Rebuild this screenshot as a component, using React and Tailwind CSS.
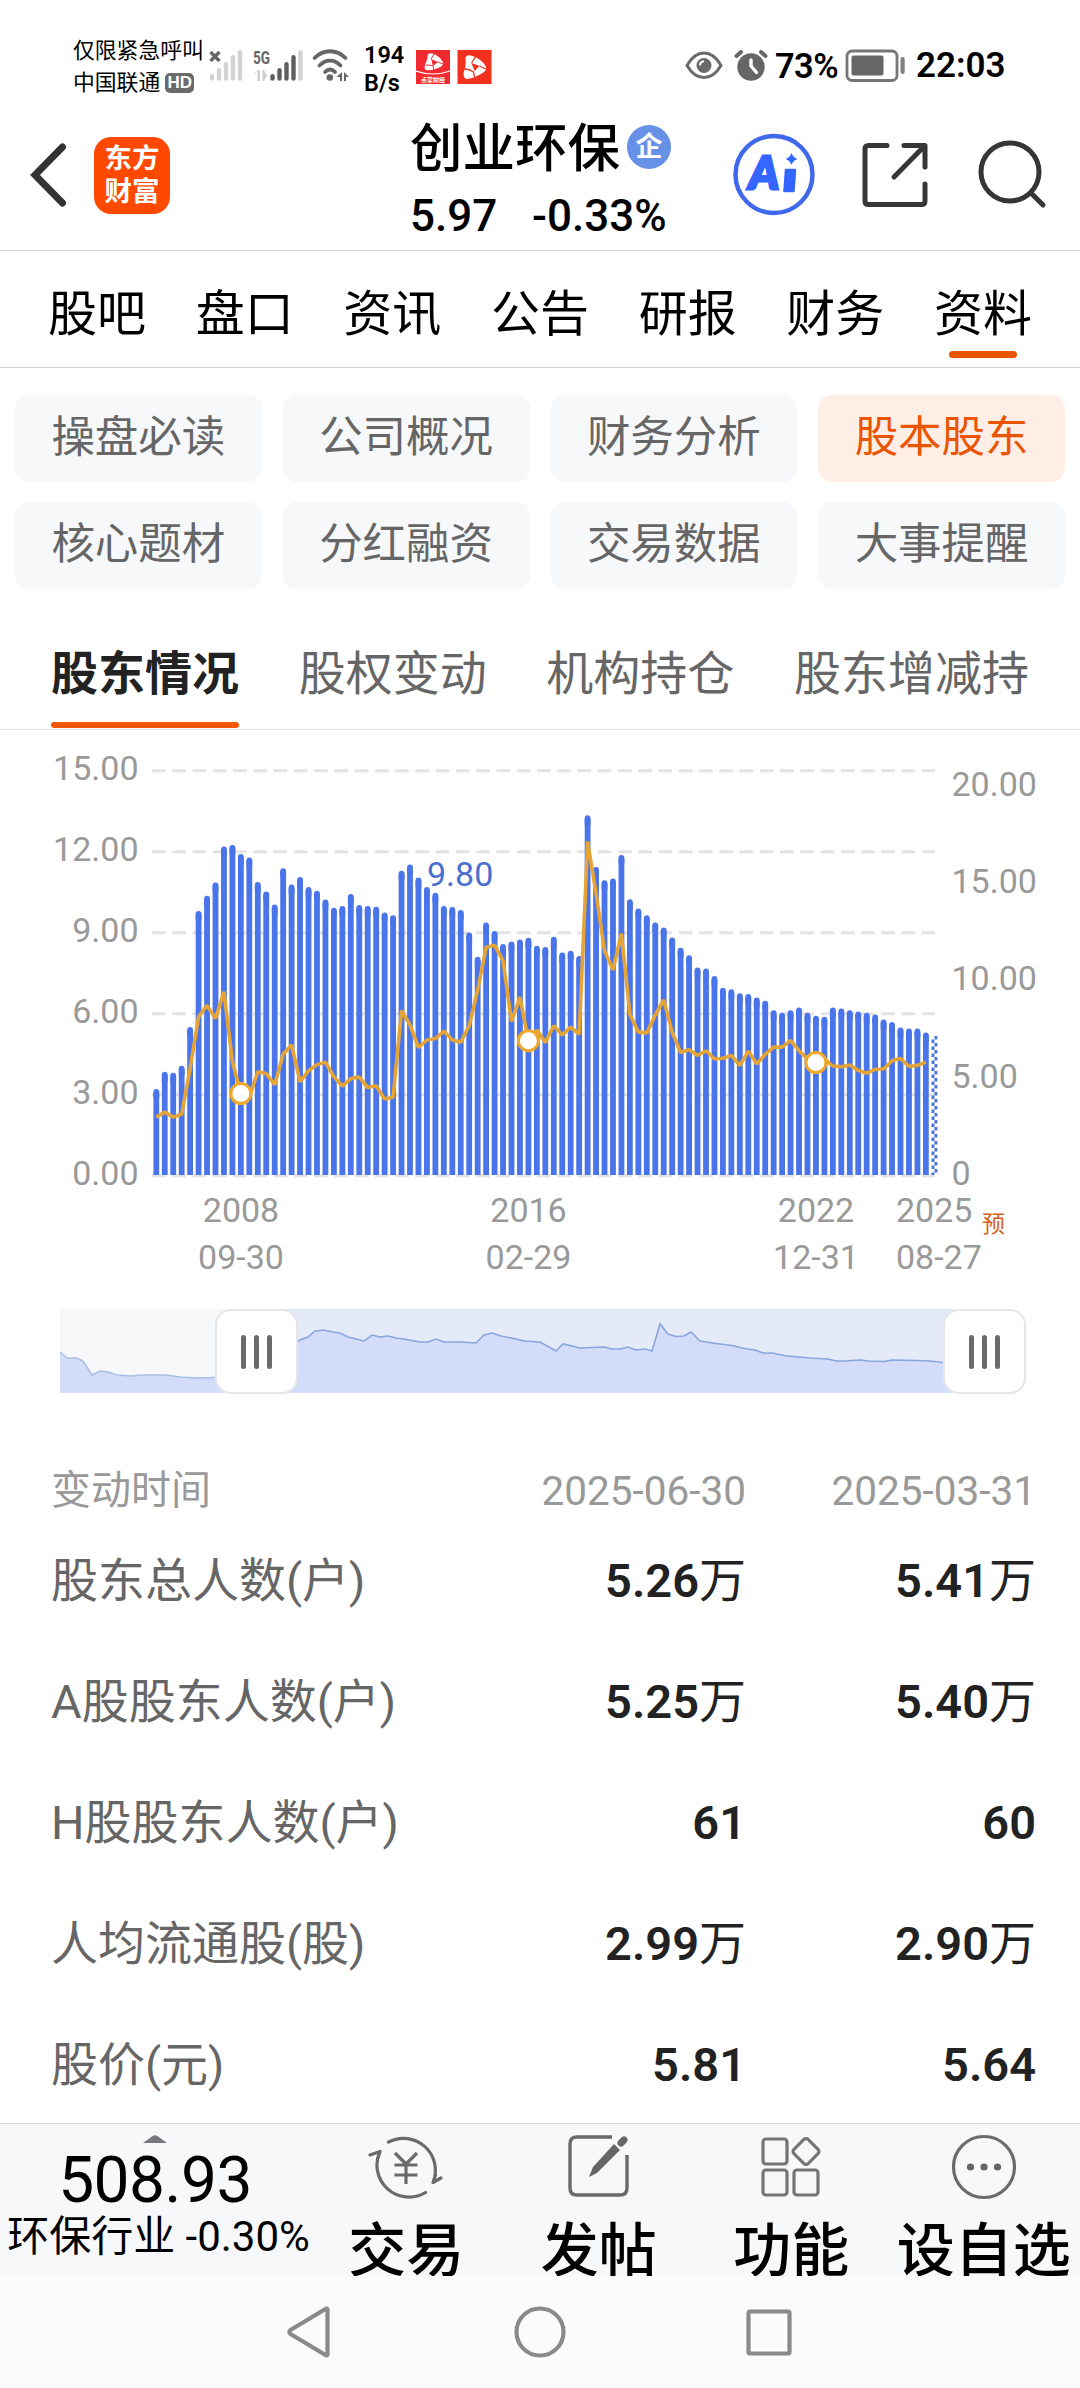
const mainTabs = ["股吧", "盘口", "资讯", "公告", "研报", "财务", "资料"];

const sections = [
  "操盘必读", "公司概况", "财务分析", "股本股东",
  "核心题材", "分红融资", "交易数据", "大事提醒",
];

const subTabs = ["股东情况", "股权变动", "机构持仓", "股东增减持"];

const rows = [
  { label: "股东总人数(户)", values: ["5.26", "5.41"], unit: "万" },
  { label: "A股股东人数(户)", values: ["5.25", "5.40"], unit: "万" },
  { label: "H股股东人数(户)", values: ["61", "60"], unit: "" },
  { label: "人均流通股(股)", values: ["2.99", "2.90"], unit: "万" },
  { label: "股价(元)", values: ["5.81", "5.64"], unit: "" },
];

// chart levels, measured down from the top of the plot in 1/2.8 px
const holders = [
  978, 930, 933, 913, 805, 480, 437, 400, 299, 295, 320, 330, 399, 425, 462, 360, 406, 385, 413, 423,
  448, 471, 466, 432, 463, 466, 468, 484, 492, 367, 350, 386, 413, 429, 466, 469, 477, 540, 608, 512,
  536, 572, 565, 560, 555, 577, 581, 552, 596, 591, 606, 212, 357, 394, 389, 323, 447, 473, 492, 512,
  526, 554, 583, 604, 638, 641, 662, 695, 699, 710, 712, 722, 731, 758, 765, 758, 750, 765, 773, 776,
  750, 753, 758, 761, 765, 770, 784, 791, 806, 809, 809, 820,
];

const prices = [
  1056, 1042, 1056, 1048, 920, 775, 743, 780, 705, 900, 990, 1000, 929, 934, 965, 880, 854, 957, 926, 909,
  902, 943, 969, 948, 944, 973, 968, 1005, 1000, 758, 798, 861, 840, 836, 815, 840, 846, 800, 700, 580,
  575, 618, 788, 720, 842, 812, 847, 800, 826, 804, 824, 284, 430, 590, 644, 542, 768, 818, 820, 770,
  728, 818, 875, 867, 883, 870, 893, 891, 883, 912, 871, 907, 880, 860, 860, 841, 870, 893, 903, 893,
  913, 915, 910, 925, 933, 922, 921, 898, 892, 914, 911, 902,
];

const markers = [10, 44, 78];

const barX = (i) => 156.3 + i * 8.457;
const levelY = (v) => v / 2.8 + 10;

const overviewPast = "0,43 7,49 16,49 23,52 32,66 40,62 48,63 57,66 71,67 80,66 106,66 120,68 137,69 155,68.5 197,68";
const overviewActive =
  "197,60 240,31 248,28 255,22 264,21 273,23 280,24 288,28 296,30 304,32 312,26 320,28 328,27 336,29 344,30 360,33 368,33 376,30 384,33 400,33 416,34 424,26 432,24 441,27 456,30 464,32 480,33 496,42 503,35 512,37 520,39 544,38 552,40 560,40 568,38 576,41 585,40 592,42 600,15 608,25 616,27.5 624,27 631,23 640,32 656,34.5 672,36.5 687,40 695,41 703,44 712,44 727,47 750,49 768,50 776,52 784,52 800,51 809,52 824,52.5 832,51 856,51.5 870,52 883,53.5 924,55";

function SignalBars({ active }) {
  const tops = [24, 18, 12, 5, 0];
  return tops.map((top, i) => (
    <line
      key={top}
      x1={3 + i * 7}
      x2={3 + i * 7}
      y1={top + 2.3}
      y2={28.5}
      stroke={i < active ? "#5f5f5f" : "#d2d2d2"}
      strokeWidth="4.4"
      strokeLinecap="round"
    />
  ));
}

function StatusBar() {
  return (
    <div className="flex h-[110px] items-start pl-[73px] font-['Roboto','Noto_Sans_CJK_SC',sans-serif] text-black">
      <div className="mt-[35px] w-[137px] text-[21.8px] leading-[32px] whitespace-nowrap">
        <p>仅限紧急呼叫</p>
        <p className="flex items-center">
          中国联通
          <span className="ml-[5px] flex h-[20px] w-[29px] items-center justify-center rounded-[5px] bg-[#6a6a6a] font-['Liberation_Sans',sans-serif] text-[17px] leading-[20px] font-bold text-white">
            HD
          </span>
        </p>
      </div>

      <svg className="mt-[49px] -ml-px" width="148" height="34" viewBox="0 -1 148 34" fill="none">
        <path d="M1.500 2 10.500 11M10.500 2 1.500 11" stroke="#666" strokeWidth="3.400" />
        <g>
          <SignalBars active={0} />
        </g>
        <text x="44" y="13.500" fill="#666" fontFamily="Roboto, sans-serif" fontWeight="700" fontSize="18.500" textLength="17" lengthAdjust="spacingAndGlyphs">5G</text>
        <path d="M44 25 48.500 20V31H50.500V20M54 20V31L58.500 26Z" fill="#cfcfcf" />
        <path d="M50 20V31M54.500 20V31" stroke="#cfcfcf" strokeWidth="2" />
        <g transform="translate(60.500 0)">
          <SignalBars active={4} />
        </g>
        <g stroke="#666" strokeWidth="3.800" strokeLinecap="round">
          <path d="M105.500 8C114.500 -1 127.500 -1 136.500 8" />
          <path d="M110.500 15.500C117 9 125 9 131.500 15.500" />
          <path d="M116 22C119.500 18.500 122.500 18.500 126 22" />
        </g>
        <circle cx="120.800" cy="27.500" r="3.300" fill="#666" />
        <path d="M127.500 27 133 22V31H131V27ZM135 22 140 27H137V31H135Z" fill="#666" />
      </svg>

      <div className="mt-[41px] ml-[7px] w-[52px] text-[23.5px] leading-[28px] font-semibold">
        <p>194</p>
        <p>B/s</p>
      </div>

      <svg className="mt-[50px]" width="76" height="34" viewBox="0 0 76 34">
        <rect width="34" height="34" fill="#f22a30" />
        <path d="M0 21Q17 27 34 21" stroke="#fff" strokeWidth="1.200" fill="none" />
        <path d="M12 4Q15 2 20 5Q25 8 27 12Q28 16 22 18Q15 21 10 20Q8 19 9 15Q12 9 12 4Z" fill="#fff" />
        <path d="M15 9 22 12 17 16Z" fill="#f22a30" />
        <path d="M10 15Q14 15 17 16L18 20M15 9 18 4M22 12 27 14" stroke="#f22a30" strokeWidth="1" fill="none" />
        <text x="17" y="32" fill="#fff" textAnchor="middle" fontSize="6" fontWeight="700" fontFamily="Noto Sans CJK SC, sans-serif">点掌财经</text>
        <g transform="translate(41.500 0)">
          <rect width="34" height="34" fill="#f1301d" />
          <path d="M8 8Q9 4 15 6Q24 9 28 16Q30 20 25 23Q17 28 10 29Q6 29 6 23Q9 16 8 8Z" fill="#fff" />
          <path d="M14 13 22 16 17 21Z" fill="#f1301d" />
          <path d="M7 19Q12 19 16 22L17 27M14 13 18 7M22 16 28 19" stroke="#f1301d" strokeWidth="1.300" fill="none" />
        </g>
      </svg>

      <svg className="mt-[50px] ml-[192px]" width="84" height="32" viewBox="0 0 84 32" fill="none">
        <path d="M3 15.500Q10 3 20 3Q30 3 37 15.500Q30 27.500 20 27.500Q10 27.500 3 15.500Z" stroke="#6a6a6a" strokeWidth="3" />
        <circle cx="20" cy="15.500" r="7.500" fill="#6a6a6a" />
        <path d="M16 15.500Q16 11.500 20 11.200" stroke="#fff" strokeWidth="2" />
        <circle cx="67" cy="17" r="13.700" fill="#666" />
        <path d="M67 10V16L72.500 22.500" stroke="#fff" strokeWidth="3.400" strokeLinecap="round" />
        <path d="M52.500 6 57 2M81.500 6 77 2" stroke="#666" strokeWidth="4" strokeLinecap="round" />
      </svg>
      <span className="mt-[46px] ml-[7px] w-[66px] text-[34.5px] leading-[40px] font-semibold tracking-[-0.6px]">73%</span>
      <svg className="mt-[49px] ml-[4px]" width="62" height="34" viewBox="0 0 62 34" fill="none">
        <rect x="2" y="2" width="50" height="29.500" rx="5" stroke="#767676" strokeWidth="2.800" />
        <rect x="6.500" y="6.500" width="32" height="20" rx="2" fill="#666" />
        <rect x="55.500" y="8" width="4.200" height="17" rx="2" fill="#808080" />
      </svg>
      <span className="mt-[46px] ml-[9px] text-[35px] leading-[40px] font-semibold">22:03</span>
    </div>
  );
}

function Header() {
  return (
    <header className="flex h-[141px] items-start border-b border-[#d5d5d5] text-black">
      <svg className="mt-[30px] ml-[27px]" width="42" height="70" viewBox="0 0 42 70" fill="none">
        <path d="M35.500 7 8 35 35.500 63" stroke="#333" strokeWidth="7" strokeLinecap="round" strokeLinejoin="miter" />
      </svg>
      <div className="mt-[27px] ml-[25px] flex h-[77px] w-[76px] flex-col items-center justify-center rounded-[17px] bg-[#ff4800] text-[27.5px] leading-[34px] font-bold text-white">
        <span>东方</span>
        <span className="-mt-px">财富</span>
      </div>

      <div className="ml-[240px] w-[265px]">
        <div className="flex h-[74px] items-center">
          <h1 className="mt-[3px] text-[52.5px] leading-[74px] font-medium whitespace-nowrap">创业环保</h1>
          <span className="ml-[7px] flex size-[44px] items-center justify-center rounded-full bg-[#6691e6] text-[27px] font-bold text-white">
            企
          </span>
        </div>
        <div className="mt-[2px] flex h-[60px] items-center text-[44px] font-medium">
          <span className="w-[122px]">5.97</span>
          <span>-0.33%</span>
        </div>
      </div>

      <svg className="mt-[23px] ml-[57px]" width="84" height="84" viewBox="0 0 84 84" fill="none">
        <circle cx="42" cy="41.500" r="38.500" stroke="#4068ea" strokeWidth="4.500" />
        <text x="17" y="56" fill="#3565ff" stroke="#3565ff" strokeWidth="3" fontFamily="Lato, sans-serif" fontWeight="900" fontStyle="italic" fontSize="46" textLength="30" lengthAdjust="spacingAndGlyphs">A</text>
        <path d="M54 37H63L61.500 58H52.500Z" fill="#3565ff" stroke="#3565ff" strokeWidth="2.500" strokeLinejoin="round" />
        <path d="M59.500 20Q61 24.500 65.500 26Q61 27.500 59.500 32Q58 27.500 53.500 26Q58 24.500 59.500 20Z" fill="#3565ff" />
      </svg>
      <svg className="mt-[30px] ml-[44px]" width="72" height="72" viewBox="0 0 72 72" fill="none" stroke="#363636" strokeWidth="5" strokeLinecap="round" strokeLinejoin="round">
        <path d="M27 5.500H8.500Q5 5.500 5 9V61Q5 64.500 8.500 64.500H61.500Q65 64.500 65 61V44" />
        <path d="M44 5.500H65V27M63 7.500 34 37" />
      </svg>
      <svg className="mt-[30px] ml-[44px]" width="74" height="74" viewBox="0 0 74 74" fill="none" stroke="#363636" strokeWidth="5" strokeLinecap="round">
        <circle cx="34" cy="32" r="29" />
        <path d="M55 53 67 65" />
      </svg>
    </header>
  );
}

function MainTabs() {
  return (
    <nav className="flex h-[117px] justify-between border-b border-[#d5d5d5] px-[48px] text-[49px] text-black">
      {mainTabs.map((tab) => (
        <div key={tab} className="flex flex-col items-center">
          <span className="mt-px flex h-[99px] items-center pt-[26px]">{tab}</span>
          {tab === "资料" && <span className="h-[7px] w-[68px] rounded-full bg-[#ea5504]" />}
        </div>
      ))}
    </nav>
  );
}

function SectionGrid() {
  return (
    <div className="grid grid-cols-4 gap-x-[21px] gap-y-[20px] px-[15px] pt-[27px]">
      {sections.map((name) => (
        <div
          key={name}
          className={`flex h-[87px] items-center justify-center rounded-[14px] pb-px text-[43.5px] ${
            name === "股本股东" ? "bg-[#ffeee6] text-[#ea5504]" : "bg-[#f7f8fa] text-[#666]"
          }`}
        >
          {name}
        </div>
      ))}
    </div>
  );
}

function SubTabs() {
  return (
    <nav className="mt-[43px] flex h-[98px] justify-between border-b border-[#e2e2e2] pr-[51px] pl-[51px] text-[47px] text-[#666]">
      {subTabs.map((tab, i) => (
        <div key={tab} className="flex flex-col">
          <span className={`flex h-[90px] items-center pb-[5px] ${i === 0 ? "font-bold text-[#222]" : ""}`}>{tab}</span>
          {i === 0 && <span className="h-[6px] rounded-full bg-[#f75808]" />}
        </div>
      ))}
    </nav>
  );
}

function HolderChart() {
  const line = prices.map((v, i) => `${barX(i)},${levelY(v)}`).join(" ");
  return (
    <svg className="block" width="1080" height="568" viewBox="0 0 1080 568" fontFamily="Roboto, 'Noto Sans CJK SC', sans-serif" fontSize="34">
      {[0, 1, 2, 3, 4, 5].map((n) => (
        <line key={n} x1="152" x2="935" y1={40.7 + n * 81} y2={40.7 + n * 81} stroke="#e3e3e3" strokeWidth="3" strokeDasharray="13.700 6.560" />
      ))}
      <g fill="#999">
        {["15.00", "12.00", "9.00", "6.00", "3.00", "0.00"].map((label, n) => (
          <text key={label} x="138.500" y={50 + n * 81} textAnchor="end">{label}</text>
        ))}
        {["20.00", "15.00", "10.00", "5.00", "0"].map((label, n) => (
          <text key={label} x="951.500" y={66 + n * 97.2}>{label}</text>
        ))}
      </g>
      <g stroke="#4a74e9" strokeWidth="5.800">
        {holders.map((v, i) => (
          <g key={i}>
            <line x1={barX(i)} x2={barX(i)} y1={levelY(v) + 2.5} y2={levelY(v) + 8} strokeLinecap="round" />
            <line x1={barX(i)} x2={barX(i)} y1={levelY(v) + 3} y2="445" />
          </g>
        ))}
      </g>
      {/* forecast bar */}
      <g stroke="#4a72e0" strokeWidth="2.900" strokeDasharray="3.500 3.500">
        <line x1="933" x2="933" y1="309.500" y2="445" />
        <line x1="935.900" x2="935.900" y1="306" y2="445" />
      </g>
      <polyline points={line} fill="none" stroke="#e5a536" strokeWidth="3.600" strokeLinejoin="bevel" />
      {markers.map((i) => (
        <circle key={i} cx={barX(i)} cy={levelY(prices[i])} r="10" fill="#fff" stroke="#f0a828" strokeWidth="3" />
      ))}
      <text x="427" y="156" fill="#4a6fd0">9.80</text>
      <g fill="#999">
        <g textAnchor="middle">
          <text x="241" y="492">2008</text>
          <text x="241" y="539">09-30</text>
          <text x="528.500" y="492">2016</text>
          <text x="528.500" y="539">02-29</text>
          <text x="816" y="492">2022</text>
          <text x="816" y="539">12-31</text>
        </g>
        <text x="896" y="492">2025</text>
        <text x="896" y="539">08-27</text>
      </g>
      <text x="982" y="502" fill="#d4601c" fontSize="23">预</text>
    </svg>
  );
}

function Handle() {
  return (
    <div className="flex h-[85px] w-[83px] items-center justify-center gap-[8px] rounded-[16px] border-2 border-[#e6e6e6] bg-white">
      <span className="h-[34px] w-[5px] rounded-full bg-[#6a6a6a]" />
      <span className="h-[34px] w-[5px] rounded-full bg-[#6a6a6a]" />
      <span className="h-[34px] w-[5px] rounded-full bg-[#6a6a6a]" />
    </div>
  );
}

function RangeSlider() {
  return (
    <div className="relative mt-[11px] ml-[60px] h-[85px] w-[966px]">
      <svg className="block" width="924" height="84" viewBox="0 0 924 84" fill="none">
        <rect width="197" height="84" fill="#f7f8fa" />
        <rect x="197" width="727" height="84" fill="#e4eaf8" />
        <polygon points={`0,84 ${overviewPast} 197,84`} fill="#d3dcf8" />
        <polygon points={`197,84 ${overviewActive} 924,84`} fill="#d3dcf8" />
        <polyline points={overviewPast} stroke="#a9c0e6" strokeWidth="1.600" />
        <polyline points={overviewActive} stroke="#87a6e0" strokeWidth="1.600" />
      </svg>
      <div className="absolute top-0 left-[155px]">
        <Handle />
      </div>
      <div className="absolute top-0 right-0">
        <Handle />
      </div>
    </div>
  );
}

function HolderTable() {
  return (
    <div className="mt-[67px] h-[662px] pr-[44px] pl-[51px]">
      <div className="grid h-[60px] grid-cols-[1fr_290px_290px] items-center text-[40px] text-[#999]">
        <span>变动时间</span>
        <span className="text-right text-[40.5px]">2025-06-30</span>
        <span className="text-right text-[40.5px]">2025-03-31</span>
      </div>
      {rows.map((row) => (
        <div key={row.label} className="grid h-[121px] grid-cols-[1fr_290px_290px] items-center text-[47px] text-[#222]">
          <span className="whitespace-nowrap text-[#666]">{row.label}</span>
          {row.values.map((value) => (
            <span key={value} className="text-right">
              <b className="font-semibold">{value}</b>
              {row.unit}
            </span>
          ))}
        </div>
      ))}
    </div>
  );
}

function TradeIcon() {
  return (
    <svg className="shrink-0" width="76" height="72" viewBox="0 0 76 72" fill="none" stroke="#6a6a6a" strokeWidth="3.200" strokeLinecap="round" strokeLinejoin="round">
      <path d="M20.500 11A32 32 0 0 1 65 51.500L73 47M65 51.500 67.500 44" />
      <path d="M57.500 61.500A32 32 0 0 1 12 20.500L2 24M12 20.500 10 27" />
      <path d="M27 22 38 33 49 22M38 33V53M26.500 34H49.500M26.500 44H49.500" strokeLinecap="butt" />
    </svg>
  );
}

function PostIcon() {
  return (
    <svg className="shrink-0" width="72" height="72" viewBox="0 0 72 72" fill="none">
      <path d="M49 6H14Q7 6 7 13V57Q7 64 14 64H57Q64 64 64 57V24" stroke="#6a6a6a" strokeWidth="3.400" />
      <path d="M51 13 57 19 34 42 26 46 30 36Z" fill="#666" />
      <path d="M58 12 61 9" stroke="#666" strokeWidth="7" strokeLinecap="round" />
    </svg>
  );
}

function FeatureIcon() {
  return (
    <svg className="shrink-0" width="72" height="72" viewBox="0 0 72 72" fill="none" stroke="#747474" strokeWidth="3.200">
      <rect x="8" y="8" width="24" height="25" rx="3" />
      <rect x="8" y="39" width="24" height="25" rx="3" />
      <rect x="39" y="39" width="24" height="25" rx="3" />
      <rect x="41" y="10.500" width="20" height="20" rx="3" transform="rotate(45 51 20.500)" />
    </svg>
  );
}

function MoreIcon() {
  return (
    <svg className="shrink-0" width="72" height="72" viewBox="0 0 72 72" fill="none">
      <circle cx="36" cy="36" r="30.500" stroke="#6a6a6a" strokeWidth="3.200" />
      <g fill="#666">
        <circle cx="22.500" cy="36" r="3.600" />
        <circle cx="36" cy="36" r="3.600" />
        <circle cx="49.500" cy="36" r="3.600" />
      </g>
    </svg>
  );
}

const actions = [
  { label: "交易", Icon: TradeIcon },
  { label: "发帖", Icon: PostIcon },
  { label: "功能", Icon: FeatureIcon },
  { label: "设自选", Icon: MoreIcon },
];

function BottomBar() {
  return (
    <div className="flex h-[153px] overflow-hidden border-t border-[#d5d5d5] bg-[#f7f8fa] text-black">
      <div className="flex w-[310px] flex-col items-center">
        <svg className="mt-[11px] shrink-0" width="24" height="8" viewBox="0 0 24 8">
          <path d="M0 8 10 .8Q12 -.5 14 .8L24 8Z" fill="#77777b" />
        </svg>
        <span className="mt-[5px] text-[64px] leading-[66px] tracking-[-0.5px]">508.93</span>
        <span className="mt-px pl-[7px] text-[42px] leading-[44px] whitespace-nowrap">
          环保行业 -0.30%
        </span>
      </div>
      {actions.map(({ label, Icon }) => (
        <div key={label} className="flex w-[192.5px] shrink-0 flex-col items-center pt-[7px]">
          <Icon />
          <span className="mt-[6px] shrink-0 text-[58px] leading-[84px] font-medium whitespace-nowrap">{label}</span>
        </div>
      ))}
    </div>
  );
}

function SystemNav() {
  return (
    <div className="flex h-[112px] justify-center bg-[#fbfbfb]">
      <svg className="mt-[26px]" width="520" height="60" viewBox="0 0 520 60" fill="none" stroke="#8a8a8a" strokeWidth="4.200" strokeLinejoin="round">
        <path d="M47.500 7.500V52.500Q47 54 45.500 53L10.500 32Q8.500 30 10.500 28L45.500 7Q47 6 47.500 7.500Z" />
        <circle cx="260" cy="30" r="23.500" />
        <rect x="468.500" y="9.500" width="41" height="42" rx="1.500" />
      </svg>
    </div>
  );
}

function App() {
  return (
    <div className="h-[2388px] w-[1080px] overflow-hidden bg-white font-['Roboto','Noto_Sans_CJK_SC',sans-serif]">
      <StatusBar />
      <Header />
      <MainTabs />
      <SectionGrid />
      <SubTabs />
      <HolderChart />
      <RangeSlider />
      <HolderTable />
      <BottomBar />
      <SystemNav />
    </div>
  );
}

export default App;
